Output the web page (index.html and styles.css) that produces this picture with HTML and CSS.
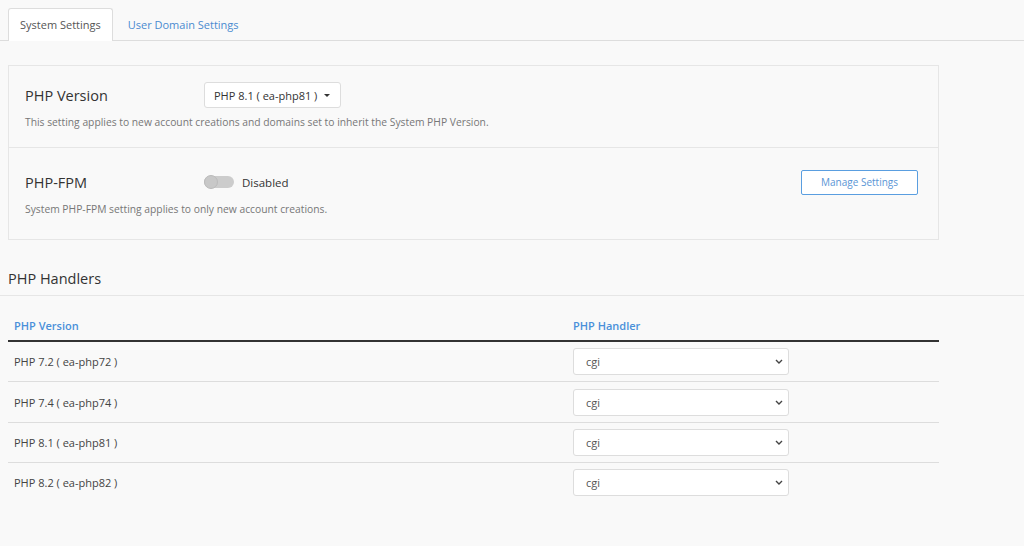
FILE: index.html
```html
<!DOCTYPE html>
<html lang="en">
<head>
  <meta charset="UTF-8" />
  <title>MultiPHP Manager</title>
  <link rel="stylesheet" href="styles.css">
</head>
<body>

<ul class="tabs">
  <li class="tab active">System Settings</li>
  <li class="tab">User Domain Settings</li>
</ul>

<div class="panel">
  <div class="panel-row">
    <div class="row-main">
      <span class="row-label">PHP Version</span>
      <button class="dropdown">PHP 8.1 ( ea-php81 ) <span class="caret"></span></button>
    </div>
    <p class="hint">This setting applies to new account creations and domains set to inherit the System PHP Version.</p>
  </div>
  <div class="panel-row">
    <div class="row-main">
      <span class="row-label">PHP-FPM</span>
      <span class="toggle"><span class="knob"></span></span>
      <span class="toggle-text">Disabled</span>
      <button class="btn-outline">Manage Settings</button>
    </div>
    <p class="hint">System PHP-FPM setting applies to only new account creations.</p>
  </div>
</div>

<h2 class="section-title">PHP Handlers</h2>

<table class="handlers">
  <thead>
    <tr><th class="col-version">PHP Version</th><th>PHP Handler</th></tr>
  </thead>
  <tbody>
    <tr><td>PHP 7.2 ( ea-php72 )</td><td><span class="select-wrap"><select><option>cgi</option></select><svg class="chev" viewBox="0 0 8 5"><path d="M1 1l3 3 3-3"/></svg></span></td></tr>
    <tr><td>PHP 7.4 ( ea-php74 )</td><td><span class="select-wrap"><select><option>cgi</option></select><svg class="chev" viewBox="0 0 8 5"><path d="M1 1l3 3 3-3"/></svg></span></td></tr>
    <tr><td>PHP 8.1 ( ea-php81 )</td><td><span class="select-wrap"><select><option>cgi</option></select><svg class="chev" viewBox="0 0 8 5"><path d="M1 1l3 3 3-3"/></svg></span></td></tr>
    <tr><td>PHP 8.2 ( ea-php82 )</td><td><span class="select-wrap"><select><option>cgi</option></select><svg class="chev" viewBox="0 0 8 5"><path d="M1 1l3 3 3-3"/></svg></span></td></tr>
  </tbody>
</table>

</body>
</html>
```

FILE: styles.css
```css
body {
  margin: 0;
  padding: 8px 0 0;
  font-family: 'Open Sans', sans-serif;
  background: #f9f9f9;
  color: #333;
}
.tabs {
  list-style: none;
  margin: 0;
  padding: 0 0 0 8px;
  display: flex;
  border-bottom: 1px solid #ddd;
  height: 32px;
}
.tab {
  font-size: 11px;
  color: #4a8bd0;
  padding: 0 14px;
  line-height: 31px;
  border: 1px solid transparent;
  border-bottom: none;
  border-radius: 3px 3px 0 0;
}
.tab.active {
  color: #555;
  background: #fff;
  border-color: #ddd;
  height: 32px;
  padding: 0 11px;
}
.panel {
  margin: 24px 85px 0 8px;
  border: 1px solid #e6e6e6;
  background: #f9f9f9;
}
.panel-row {
  padding: 16px 20px 10px 16px;
  height: 55px;
}
.panel-row + .panel-row {
  border-top: 1px solid #e6e6e6;
  padding-top: 21px;
  height: 60px;
}
.row-main {
  display: flex;
  align-items: center;
  height: 26px;
}
.row-label {
  font-size: 14.5px;
  width: 179px;
}
.dropdown {
  font-family: inherit;
  font-size: 11px;
  color: #333;
  background: #fff;
  border: 1px solid #ddd;
  border-radius: 3px;
  height: 26px;
  padding: 0 10px 0 9px;
  display: flex;
  align-items: center;
  gap: 7px;
}
.caret {
  width: 0;
  height: 0;
  border-left: 3px solid transparent;
  border-right: 3px solid transparent;
  border-top: 3px solid #333;
}
.toggle {
  width: 30px;
  height: 12px;
  background: #ccc;
  border-radius: 6px;
  position: relative;
}
.knob {
  position: absolute;
  left: 0;
  top: -1px;
  width: 14px;
  height: 14px;
  border-radius: 50%;
  background: #c8c8c8;
  border: 1px solid #bbb;
  box-sizing: border-box;
}
.toggle-text {
  font-size: 11.5px;
  margin-left: 8px;
}
.btn-outline {
  margin-left: auto;
  font-family: inherit;
  font-size: 10px;
  color: #5a95d5;
  background: #fff;
  border: 1px solid #5a9ee0;
  border-radius: 2px;
  width: 117px;
  height: 25px;
}
.hint {
  margin: 7px 0 0;
  font-size: 10.3px;
  color: #777;
}
.section-title {
  margin: 29px 0 0;
  padding: 0 0 7px 8px;
  font-size: 14.5px;
  font-weight: 400;
  border-bottom: 1px solid #e6e6e6;
}
.handlers {
  margin: 16px 0 0 8px;
  width: 931px;
  border-collapse: collapse;
  font-size: 11px;
}
.handlers th {
  text-align: left;
  color: #4a90d9;
  font-weight: 600;
  padding: 6px 6px 7px;
  border-bottom: 2px solid #333;
}
.col-version {
  width: 547px;
}
.handlers td {
  padding: 0 6px;
  height: 39.4px;
  border-top: 1px solid #ddd;
  color: #444;
}
.handlers tbody tr:first-child td {
  border-top: none;
}
.select-wrap {
  position: relative;
  display: inline-block;
  vertical-align: middle;
}
.handlers select {
  display: block;
  appearance: none;
  font-family: inherit;
  font-size: 11px;
  color: #555;
  width: 216px;
  height: 27px;
  padding: 0 12px;
  background: #fff;
  border: 1px solid #ddd;
  border-radius: 3px;
}
.chev {
  position: absolute;
  right: 6px;
  top: 11px;
  width: 8px;
  height: 5px;
  fill: none;
  stroke: #444;
  stroke-width: 1.4;
}
```
